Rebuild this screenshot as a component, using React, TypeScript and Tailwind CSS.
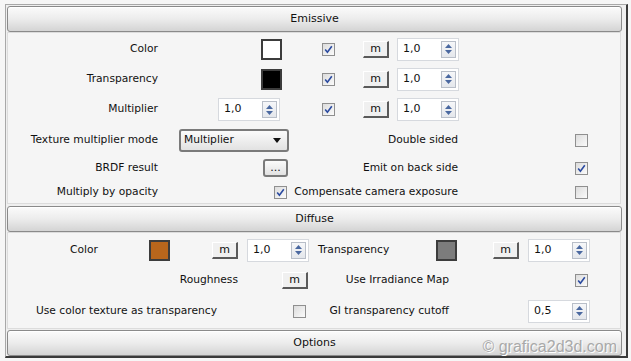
import React from "react";

const font = { fontFamily: '"DejaVu Sans", Tahoma, sans-serif' };

const Header = ({ title, children }: { title: string; children?: React.ReactNode }) => (
  <div className="relative ml-[1px] h-[26px] w-[615px] rounded-[3px] border border-[#8a8a8a] bg-gradient-to-b from-[#fbfbfb] via-[#ececec] to-[#d4d4d4] flex items-center justify-center text-[11px] text-[#111] shadow-[inset_0_1px_0_#ffffff]">
    {title}
    {children}
  </div>
);

const Check = ({ checked = false }: { checked?: boolean }) => (
  <div className="w-[13px] h-[13px] shrink-0 border border-[#8f8f8f] bg-gradient-to-br from-[#dcdcdc] to-[#fbfbfb] flex items-center justify-center">
    {checked && (
      <svg width="9" height="9" viewBox="0 0 9 9">
        <path d="M1.2 4.6 L3.4 7.2 L7.8 1.2" fill="none" stroke="#2a4aa0" strokeWidth="1.6" />
      </svg>
    )}
  </div>
);

const MButton = () => (
  <div className="w-[26px] h-[17px] shrink-0 border-t border-l border-t-[#ffffff] border-l-[#ffffff] border-r-2 border-b-2 border-r-[#5a5a5a] border-b-[#5a5a5a] bg-[#f0f0f0] flex items-center justify-center text-[11px] leading-none text-[#111] pb-[1px]">
    m
  </div>
);

const Spin = ({ value = "1,0" }: { value?: string }) => (
  <div className="w-[62px] h-[23px] shrink-0 border border-[#d6d9de] bg-white flex items-center">
    <div className="flex-1 pl-[5px] text-[11px] text-[#111]">{value}</div>
    <div className="w-[15px] h-[17px] mr-[2px] border border-[#b8bec8] bg-gradient-to-b from-[#f6f7f9] to-[#e4e7ec] flex flex-col items-center justify-center gap-[2px]">
      <svg width="7" height="4" viewBox="0 0 7 4">
        <path d="M0 4 L3.5 0 L7 4 Z" fill="#4a68a0" />
      </svg>
      <svg width="7" height="4" viewBox="0 0 7 4">
        <path d="M0 0 L3.5 4 L7 0 Z" fill="#4a68a0" />
      </svg>
    </div>
  </div>
);

const Swatch = ({ color }: { color: string }) => (
  <div className="w-[21px] h-[21px] shrink-0 border-2 border-[#3c3c3c]">
    <div className="w-full h-full" style={{ background: color }} />
  </div>
);

const Label = ({ w, children, left = false }: { w: string; children: React.ReactNode; left?: boolean }) => (
  <div className={`${w} shrink-0 whitespace-nowrap text-[10.7px] text-[#111] ${left ? "text-left" : "text-right"}`}>{children}</div>
);

export default function App() {
  return (
    <div className="w-[631px] h-[361px] bg-[#f6f6f6] pl-[5px] pt-[4px] overflow-hidden" style={font}>
      <div className="w-[623px] h-[354px] border-l border-t border-l-[#a8a8a8] border-t-[#a8a8a8] border-r-2 border-b-2 border-r-[#3a3a3a] border-b-[#3a3a3a] bg-[#efefef] pt-[1px]">
        <Header title="Emissive" />

        {/* Emissive */}
        <div className="ml-[1px] w-[614px] h-[172px] border border-[#dcdcdc] bg-[#f5f5f5] pt-[1px]">
          {[
            { label: "Color", swatch: "#ffffff" },
            { label: "Transparency", swatch: "#000000" },
            { label: "Multiplier", swatch: null },
          ].map((r, i) => (
            <div key={r.label} className={`flex items-center ${i === 2 ? "h-[31px]" : "h-[30px]"}`}>
              <Label w="w-[150px]">{r.label}</Label>
              <div className="w-[124px] shrink-0 flex justify-end">
                {r.swatch ? <Swatch color={r.swatch} /> : <div className="mr-[2px]"><Spin /></div>}
              </div>
              <div className="ml-[40px]"><Check checked /></div>
              <div className="ml-[28px]"><MButton /></div>
              <div className="ml-[8px]"><Spin /></div>
            </div>
          ))}

          <div className="flex items-center h-[30px]">
            <Label w="w-[150px]">Texture multiplier mode</Label>
            <div className="ml-[21px] w-[110px] h-[23px] shrink-0 rounded-[3px] border-2 border-[#7a7a7a] bg-gradient-to-b from-[#fbfbfb] to-[#e2e2e2] flex items-center justify-between pl-[3px] pr-[6px] text-[10.7px] text-[#111]">
              Multiplier
              <svg width="8" height="5" viewBox="0 0 8 5">
                <path d="M0 0 L8 0 L4 5 Z" fill="#111" />
              </svg>
            </div>
            <Label w="w-[169px]">Double sided</Label>
            <div className="ml-[117px]"><Check /></div>
          </div>

          <div className="flex items-center h-[26px]">
            <Label w="w-[150px]">BRDF result</Label>
            <div className="ml-[105px] w-[25px] h-[18px] shrink-0 rounded-[3px] border-2 border-[#7a7a7a] bg-gradient-to-b from-[#fbfbfb] to-[#e2e2e2] flex items-end justify-center pb-[2px] text-[11px] leading-none text-[#111]">
              ...
            </div>
            <Label w="w-[170px]">Emit on back side</Label>
            <div className="ml-[117px]"><Check checked /></div>
          </div>

          <div className="flex items-center h-[22px]">
            <Label w="w-[150px]">Multiply by opacity</Label>
            <div className="ml-[116px]"><Check checked /></div>
            <Label w="w-[171px]">Compensate camera exposure</Label>
            <div className="ml-[117px]"><Check /></div>
          </div>
        </div>

        <div className="mt-[2px]">
          <Header title="Diffuse" />
        </div>

        {/* Diffuse */}
        <div className="ml-[1px] w-[614px] h-[97px] border border-[#dcdcdc] bg-[#f5f5f5] pt-[2px]">
          <div className="flex items-center h-[30px]">
            <Label w="w-[90px]">Color</Label>
            <div className="ml-[51px]"><Swatch color="#b8661c" /></div>
            <div className="ml-[42px]"><MButton /></div>
            <div className="ml-[9px]"><Spin /></div>
            <div className="ml-[9px]"><Label w="w-[118px]" left>Transparency</Label></div>
            <Swatch color="#7c7c7c" />
            <div className="ml-[36px]"><MButton /></div>
            <div className="ml-[9px]"><Spin /></div>
          </div>
          <div className="flex items-center h-[31px]">
            <Label w="w-[230px]">Roughness</Label>
            <div className="ml-[44px]"><MButton /></div>
            <Label w="w-[141px]">Use Irradiance Map</Label>
            <div className="ml-[126px]"><Check checked /></div>
          </div>
          <div className="flex items-center h-[30px]">
            <Label w="w-[209px]">Use color texture as transparency</Label>
            <div className="ml-[76px]"><Check /></div>
            <Label w="w-[143px]">GI transparency cutoff</Label>
            <div className="ml-[79px]"><Spin value="0,5" /></div>
          </div>
        </div>

        <div className="mt-[1px]">
          <Header title="Options">
            <span
              className="absolute right-[4px] top-[8px] text-[16px] leading-none text-[#a9a9a9] [text-shadow:1px_1px_0_#ffffff]"
              style={{ fontFamily: '"Liberation Sans", Arial, sans-serif' }}
            >
              © grafica2d3d.com
            </span>
          </Header>
        </div>
      </div>
    </div>
  );
}
